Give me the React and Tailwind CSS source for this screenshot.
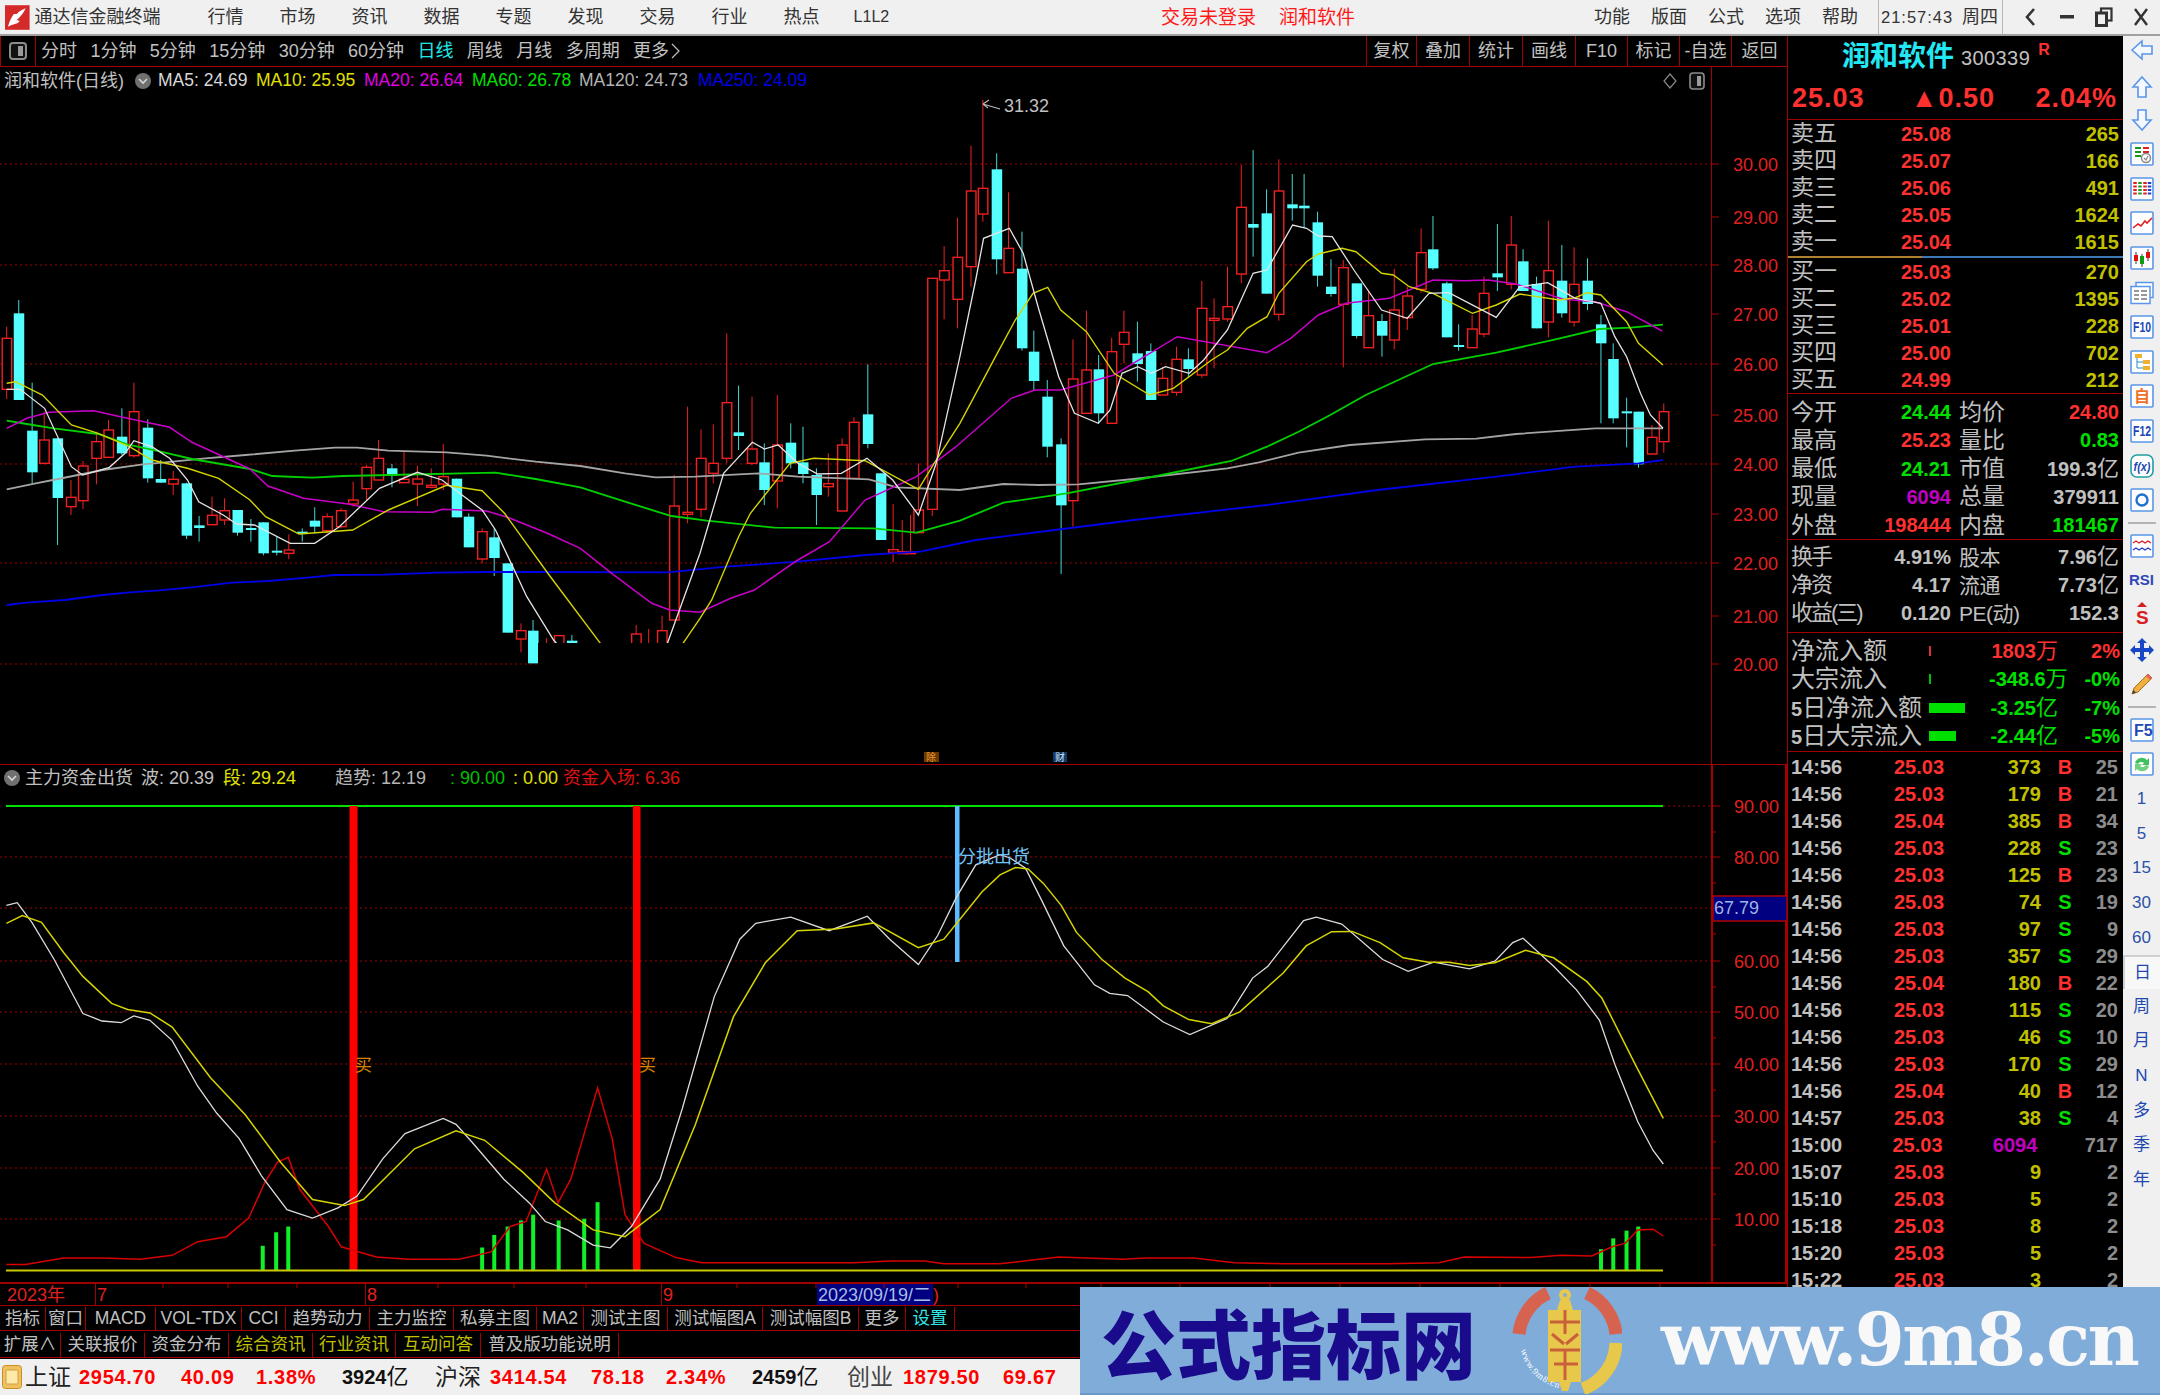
import React from "react";

// coordinate helpers: read off zoomed crops, mapped back to page pixels
const z8 = ([x, y]) => [x / 2.24, 280 + y / 3];
const z9 = ([x, y]) => [620 + x / 2.53, 80 + y / 3];
const z10 = ([x, y]) => [1180 + x / 2.53, 130 + y / 3];
const z11 = ([x, y]) => [x / 1.568, 760 + y / 2.958];
const z12 = ([x, y]) => [1000 + x / 1.96, 760 + y / 2.958];

const candles8 = [
  [15, "r", 140, 175, 328, 357], [42, "c", 60, 100, 360, 360], [72, "c", 308, 452, 577, 610], [99, "r", 395, 480, 550, 553],
  [129, "c", 475, 475, 654, 795], [159, "r", 600, 652, 680, 705], [186, "r", 543, 558, 662, 687], [216, "r", 455, 485, 535, 613],
  [243, "r", 420, 450, 532, 532], [273, "c", 385, 470, 520, 525], [300, "r", 308, 395, 527, 533], [331, "c", 418, 443, 595, 608],
  [360, "c", 540, 597, 608, 608], [388, "r", 573, 598, 612, 645], [418, "c", 608, 610, 767, 777], [446, "c", 708, 736, 744, 785],
  [475, "r", 650, 706, 734, 734], [503, "r", 655, 692, 720, 735], [532, "c", 690, 690, 758, 767], [562, "c", 717, 744, 748, 785],
  [590, "c", 727, 727, 820, 826], [620, "c", 770, 812, 817, 826], [647, "r", 763, 810, 820, 838], [677, "c", 745, 755, 758, 785],
  [705, "c", 682, 722, 740, 760], [733, "r", 700, 710, 752, 760], [764, "r", 685, 692, 740, 745], [791, "r", 605, 660, 672, 680],
  [821, "r", 555, 562, 626, 660], [848, "r", 480, 535, 600, 600], [878, "c", 552, 565, 587, 622], [905, "r", 515, 598, 608, 608],
  [935, "r", 557, 597, 612, 678], [966, "r", 565, 616, 622, 625], [993, "r", 492, 590, 612, 630], [1023, "c", 596, 596, 712, 712],
  [1050, "c", 700, 710, 802, 802], [1080, "r", 745, 755, 837, 850], [1107, "c", 745, 772, 834, 888], [1137, "c", 850, 850, 1058, 1058],
  [1167, "r", 1030, 1052, 1077, 1117], [1194, "c", 1020, 1052, 1150, 1150], [1224, "r", 1075, 1100, 1200, 1200], [1252, "r", 1067, 1067, 1200, 1200],
  [1281, "c", 1065, 1082, 1200, 1200], [1425, "r", 1035, 1062, 1200, 1200], [1453, "r", 1047, 1100, 1200, 1200], [1483, "r", 1007, 1052, 1200, 1200],
];
const candles9 = [
  [137, "r", 1185, 1278, 1620, 1620], [171, "r", 980, 1297, 1303, 1330], [205, "r", 1048, 1135, 1288, 1312], [236, "r", 1033, 1150, 1180, 1210],
  [270, "r", 760, 968, 1135, 1150], [300, "c", 917, 1057, 1068, 1110], [334, "r", 950, 1107, 1150, 1155], [365, "c", 1090, 1147, 1230, 1275],
  [398, "r", 945, 1095, 1203, 1285], [432, "c", 1030, 1088, 1150, 1165], [463, "c", 1040, 1147, 1182, 1210], [497, "c", 1165, 1185, 1245, 1335],
  [527, "r", 1120, 1211, 1220, 1250], [562, "r", 1075, 1095, 1293, 1293], [592, "r", 1012, 1027, 1195, 1195], [627, "c", 853, 1003, 1092, 1105],
  [660, "c", 1180, 1180, 1380, 1380], [691, "r", 1272, 1409, 1417, 1447], [714, "r", 1320, 1415, 1417, 1417], [735, "r", 1305, 1415, 1417, 1417],
  [755, "r", 1150, 1290, 1358, 1358], [790, "r", 595, 595, 1288, 1308], [820, "r", 498, 572, 600, 718], [854, "r", 413, 532, 658, 745],
  [888, "r", 197, 333, 560, 620], [918, "r", 60, 325, 402, 425], [953, "c", 220, 268, 538, 583], [983, "r", 337, 505, 578, 578],
  [1017, "c", 455, 566, 805, 812], [1047, "c", 752, 815, 903, 930], [1081, "c", 900, 950, 1100, 1132], [1116, "c", 1075, 1093, 1276, 1482],
  [1146, "r", 778, 897, 1262, 1340], [1180, "r", 692, 870, 1000, 1000], [1211, "c", 825, 868, 1000, 1030], [1244, "r", 773, 815, 1030, 1030],
  [1275, "r", 692, 757, 793, 850], [1309, "c", 725, 820, 852, 905], [1343, "c", 790, 813, 960, 960], [1373, "r", 860, 895, 945, 945],
  [1408, "r", 800, 838, 937, 947], [1438, "c", 805, 838, 867, 893], [1472, "r", 603, 685, 885, 893], [1503, "r", 655, 715, 718, 865],
  [1537, "r", 560, 680, 717, 725],
];
const candles10 = [
  [155, "r", 105, 232, 432, 460], [185, "c", 60, 282, 293, 380], [219, "c", 178, 250, 491, 491], [250, "r", 88, 183, 553, 572],
  [284, "c", 132, 223, 235, 272], [314, "c", 132, 227, 235, 293], [348, "c", 245, 277, 437, 470], [382, "c", 388, 470, 492, 500],
  [413, "r", 390, 413, 523, 712], [447, "c", 460, 460, 618, 625], [477, "r", 480, 557, 653, 653], [511, "c", 552, 573, 617, 680],
  [542, "r", 417, 540, 630, 658], [575, "r", 470, 498, 563, 600], [610, "r", 295, 368, 478, 488], [640, "c", 258, 358, 415, 420],
  [675, "c", 455, 460, 622, 622], [705, "c", 583, 645, 650, 662], [739, "r", 555, 597, 653, 653], [769, "r", 440, 490, 612, 622],
  [803, "c", 282, 430, 442, 483], [838, "r", 258, 345, 463, 478], [868, "c", 358, 394, 483, 483], [902, "c", 440, 462, 595, 595],
  [932, "r", 272, 422, 576, 622], [966, "c", 345, 452, 550, 563], [997, "r", 352, 463, 576, 590], [1031, "c", 385, 452, 522, 540],
  [1065, "c", 555, 583, 640, 880], [1096, "c", 640, 687, 865, 880], [1130, "c", 803, 844, 848, 952], [1160, "c", 845, 845, 1003, 1013],
  [1194, "r", 885, 922, 972, 972], [1224, "r", 820, 845, 935, 968],
];

const realCandle = (fn) => ([zx, type, hi, top, bot, lo]) => ({
  x: fn([zx, 0])[0], type, hi: fn([0, hi])[1], top: fn([0, top])[1], bot: fn([0, bot])[1], lo: fn([0, lo])[1],
});
const allCandles = [...candles8.map(realCandle(z8)), ...candles9.map(realCandle(z9)), ...candles10.map(realCandle(z10))];

// stitch one curve out of the three crops
const joined = (a, b, c, cut1 = 630, cut2 = 1190) => [
  ...a.map(z8).filter((p) => p[0] <= cut1),
  ...b.map(z9).filter((p) => p[0] > cut1 && p[0] < cut2),
  ...c.map(z10).filter((p) => p[0] >= cut2),
];
const pts = (list) => list.map((p) => `${p[0].toFixed(1)},${p[1].toFixed(1)}`).join(" ");

const ma250 = joined(
  [[15, 975], [60, 968], [145, 960], [230, 945], [290, 937], [350, 932], [430, 922], [520, 908], [600, 903], [690, 893], [750, 885], [860, 884], [980, 878], [1090, 876], [1200, 876]],
  [[120, 1477], [270, 1460], [450, 1445], [620, 1425], [760, 1415], [900, 1380], [1100, 1350], [1300, 1320], [1568, 1285]],
  [[220, 1125], [500, 1080], [800, 1040], [1000, 1010], [1160, 1000], [1222, 990]]
);
const ma120 = joined(
  [[15, 628], [80, 610], [130, 597], [230, 570], [320, 553], [370, 547], [460, 535], [550, 525], [660, 512], [750, 503], [800, 503], [870, 512], [1000, 517], [1090, 527], [1200, 545], [1300, 558], [1400, 580]],
  [[90, 1192], [190, 1190], [350, 1180], [450, 1190], [630, 1198], [700, 1222], [860, 1230], [970, 1212], [1060, 1215], [1160, 1213], [1300, 1197], [1450, 1178], [1568, 1160]],
  [[120, 1015], [200, 997], [300, 968], [430, 945], [620, 928], [750, 926], [850, 912], [1050, 895], [1222, 895]]
);
const ma60 = joined(
  [[15, 422], [60, 432], [120, 445], [220, 462], [290, 495], [360, 515], [430, 537], [560, 567], [610, 588], [700, 593], [770, 588], [1110, 578], [1200, 597], [1300, 622], [1400, 665]],
  [[130, 1308], [220, 1322], [390, 1343], [640, 1345], [750, 1358], [860, 1322], [970, 1268], [1130, 1240], [1320, 1197], [1450, 1175], [1568, 1135]],
  [[130, 993], [220, 950], [300, 905], [380, 855], [470, 795], [640, 702], [800, 668], [950, 628], [1060, 597], [1140, 593], [1222, 584]]
);
const ma20 = joined(
  [[15, 445], [60, 415], [110, 397], [210, 392], [270, 410], [380, 442], [430, 487], [560, 567], [600, 618], [680, 655], [780, 672], [860, 695], [970, 697], [990, 688], [1090, 693], [1140, 713], [1230, 762], [1300, 805], [1370, 880]],
  [[70, 1560], [280, 1555], [340, 1530], [450, 1440], [530, 1385], [620, 1260], [750, 1190], [850, 1100], [990, 955], [1050, 930], [1115, 930], [1250, 885], [1410, 770], [1450, 787], [1568, 818]],
  [[220, 668], [280, 625], [350, 555], [420, 520], [530, 505], [640, 450], [720, 452], [780, 450], [850, 462], [970, 508], [1050, 515], [1130, 545], [1220, 603]]
);
const ma20Fix = [...ma20.slice(0, 19), ...[[1460, 970], [1500, 990], [1568, 997]].map(z8), ...ma20.slice(19).filter((p) => p[0] > 700)];
const ma10 = joined(
  [[15, 310], [35, 305], [95, 345], [160, 435], [220, 460], [290, 500], [340, 540], [420, 565], [490, 595], [560, 660], [595, 710], [670, 762], [790, 750], [870, 690], [1000, 616], [1080, 632], [1130, 700], [1230, 885], [1345, 1090], [1430, 1250], [1530, 1090], [1568, 1015]],
  [[232, 1560], [300, 1370], [330, 1300], [430, 1150], [490, 1135], [620, 1142], [755, 1228], [800, 1140], [860, 1030], [950, 830], [1000, 720], [1045, 640], [1082, 622], [1115, 690], [1180, 755], [1250, 880], [1340, 945], [1400, 925]],
  [[80, 690], [120, 660], [170, 595], [220, 560], [250, 490], [320, 395], [350, 372], [410, 355], [445, 365], [510, 430], [540, 435], [580, 470], [640, 490], [740, 550], [800, 525], [860, 492], [960, 510], [1000, 503], [1030, 488], [1065, 495], [1130, 575], [1160, 640], [1222, 705]],
  700, 1195
);
const ma5 = joined(
  [[15, 328], [45, 328], [100, 385], [160, 560], [185, 585], [245, 562], [280, 520], [300, 482], [340, 500], [380, 535], [420, 600], [445, 665], [500, 705], [530, 732], [570, 735], [650, 790], [705, 790], [760, 740], [850, 625], [935, 577], [990, 600], [1040, 650], [1080, 690], [1110, 750], [1180, 950], [1240, 1080], [1350, 1250], [1495, 1090], [1568, 820]],
  [[262, 1180], [335, 1087], [365, 1107], [400, 1095], [450, 1150], [500, 1182], [560, 1180], [625, 1135], [690, 1200], [755, 1305], [800, 1150], [860, 830], [900, 600], [920, 475], [985, 445], [1020, 520], [1060, 690], [1110, 890], [1150, 1000], [1210, 1030], [1240, 990], [1270, 880], [1310, 860], [1345, 880], [1380, 860], [1440, 880], [1500, 820], [1540, 760]],
  [[60, 690], [120, 600], [185, 430], [220, 420], [285, 285], [320, 295], [350, 318], [385, 320], [440, 420], [510, 540], [575, 565], [630, 490], [680, 488], [800, 562], [860, 470], [930, 458], [1000, 505], [1065, 520], [1100, 620], [1130, 680], [1165, 790], [1190, 855], [1222, 895]],
  700, 1200
);

const oscWhite = [
  ...[[10, 430], [27, 422], [50, 480], [85, 590], [130, 750], [160, 772], [190, 777], [210, 757], [235, 770], [270, 830], [310, 965], [340, 1045], [375, 1120], [410, 1230], [450, 1330], [490, 1355], [530, 1325], [560, 1290], [600, 1180], [635, 1105], [695, 1060], [715, 1078], [740, 1130], [790, 1240], [830, 1310], [855, 1365], [890, 1390], [930, 1435], [957, 1443], [990, 1380], [1035, 1240], [1070, 1030], [1120, 700], [1160, 530], [1185, 483], [1240, 465], [1300, 505], [1360, 462], [1395, 530], [1440, 605], [1470, 520], [1500, 405], [1530, 310], [1568, 280]].map(z11),
  ...[[20, 290], [50, 320], [80, 410], [125, 550], [185, 665], [215, 690], [250, 697], [320, 775], [372, 812], [445, 765], [495, 645], [525, 610], [595, 475], [620, 465], [670, 485], [750, 590], [800, 625], [850, 598], [920, 618], [970, 595], [1005, 540], [1025, 527], [1085, 610], [1130, 680], [1175, 770], [1205, 900], [1250, 1070], [1280, 1155], [1300, 1195]].map(z12),
];
const oscYellow = [
  ...[[10, 483], [35, 460], [65, 480], [100, 570], [130, 640], [175, 720], [200, 738], [235, 748], [270, 790], [330, 940], [385, 1050], [440, 1190], [490, 1300], [540, 1318], [570, 1300], [650, 1150], [715, 1097], [760, 1125], [820, 1220], [870, 1310], [930, 1390], [980, 1410], [1035, 1330], [1090, 1080], [1150, 760], [1200, 600], [1250, 505], [1310, 500], [1370, 482], [1440, 555], [1480, 530], [1540, 390], [1568, 340]].map(z11),
  ...[[30, 318], [55, 322], [85, 365], [120, 430], [150, 510], [200, 590], [245, 645], [290, 685], [320, 727], [370, 768], [415, 780], [470, 745], [555, 630], [600, 550], [650, 508], [690, 507], [745, 540], [790, 585], [840, 598], [880, 598], [920, 608], [970, 600], [1030, 563], [1085, 585], [1150, 655], [1180, 705], [1245, 900], [1300, 1060]].map(z12),
];
const oscRed = [
  ...[[10, 1492], [40, 1492], [100, 1473], [160, 1473], [220, 1477], [270, 1465], [310, 1425], [355, 1410], [390, 1355], [415, 1250], [435, 1190], [452, 1175], [470, 1270], [515, 1380], [535, 1440], [590, 1470], [640, 1477], [720, 1477], [770, 1455], [800, 1380], [825, 1365], [857, 1210], [875, 1310], [895, 1240], [937, 970], [960, 1120], [980, 1345], [1010, 1430], [1060, 1472], [1100, 1487], [1340, 1487], [1395, 1482], [1450, 1482], [1480, 1490], [1568, 1490]].map(z11),
  ...[[60, 1480], [115, 1470], [240, 1477], [285, 1473], [380, 1473], [460, 1487], [560, 1490], [680, 1490], [760, 1490], [860, 1487], [910, 1470], [1040, 1472], [1100, 1465], [1160, 1467], [1200, 1440], [1225, 1430], [1250, 1390], [1280, 1388], [1300, 1408]].map(z12),
];
const greenBars = [
  ...[[412, 1437], [433, 1397], [452, 1380], [756, 1442], [775, 1405], [796, 1380], [817, 1362], [836, 1345], [876, 1362], [916, 1357], [937, 1308]].map(z11),
  ...[[1178, 1447], [1202, 1415], [1228, 1392], [1251, 1380]].map(z12),
];

function MainChart() {
  return (
    <svg className="block" width="1711" height="669" viewBox="0 95 1711 669">
      {[164, 265, 364, 464, 563, 664].map((y) => (
        <line key={y} x1="0" x2="1711" y1={y} y2={y} stroke="#a00000" strokeWidth="1" strokeDasharray="2 3" />
      ))}
      {allCandles.map((c, i) =>
        c.type === "c" ? (
          <g key={i}>
            <line x1={c.x} x2={c.x} y1={c.hi} y2={c.lo} stroke="#45d8d8" strokeWidth="1" />
            <rect x={c.x - 5} y={c.top} width="10.5" height={Math.max(c.bot - c.top, 2)} fill="#55ffff" />
          </g>
        ) : (
          <g key={i}>
            <line x1={c.x} x2={c.x} y1={c.hi} y2={c.lo} stroke="#f02020" strokeWidth="1" />
            <rect x={c.x - 4.5} y={c.top} width="9.5" height={Math.max(c.bot - c.top, 2)} fill="#000" stroke="#f02020" strokeWidth="1.4" />
          </g>
        )
      )}
      <polyline points={pts(ma250)} fill="none" stroke="#0000e8" strokeWidth="1.8" />
      <polyline points={pts(ma120)} fill="none" stroke="#a4a4a4" strokeWidth="1.8" />
      <polyline points={pts(ma60)} fill="none" stroke="#00d000" strokeWidth="1.8" />
      <polyline points={pts(ma20Fix)} fill="none" stroke="#c800c8" strokeWidth="1.5" />
      <polyline points={pts(ma10)} fill="none" stroke="#d4d400" strokeWidth="1.4" />
      <polyline points={pts(ma5)} fill="none" stroke="#e4e4e4" strokeWidth="1.3" />
      {/* lower strip of the price pane is blanked in the reference */}
      <rect x="538" y="643" width="1173" height="121" fill="#000" />
      <path d="M983 104 L1000 109 M983 104 L989 100 M983 104 L988 108" stroke="#b8b8b8" strokeWidth="1.2" fill="none" />
      <text x="1004" y="112" fontSize="18" fill="#c0c0c0">31.32</text>
      <rect x="924" y="752" width="15" height="10" fill="#6b3800" />
      <text x="926" y="761" fontSize="10" fill="#e89a30">除</text>
      <rect x="1053" y="752" width="14" height="10" fill="#123a66" />
      <text x="1055" y="761" fontSize="10" fill="#cfe6ff">财</text>
    </svg>
  );
}

function LowerChart() {
  return (
    <svg className="block" width="1711" height="492" viewBox="0 790 1711 492">
      {[857, 908, 961, 1012, 1064, 1116, 1168, 1219].map((y) => (
        <line key={y} x1="0" x2="1711" y1={y} y2={y} stroke="#a00000" strokeWidth="1" strokeDasharray="2 3" />
      ))}
      <line x1="1663" x2="1711" y1="806" y2="806" stroke="#a00000" strokeDasharray="2 3" />
      <line x1="6" x2="1663" y1="806" y2="806" stroke="#00e000" strokeWidth="2" />
      <rect x="349.5" y="806" width="8" height="464" fill="#ff0000" />
      <rect x="633" y="806" width="7.5" height="464" fill="#ff0000" />
      <rect x="955" y="806" width="4.5" height="156" fill="#5cbcff" />
      {greenBars.map((b, i) => (
        <rect key={i} x={b[0] - 2} y={b[1]} width="4" height={1270 - b[1]} fill="#10f028" />
      ))}
      <polyline points={pts(oscRed)} fill="none" stroke="#d80000" strokeWidth="1.5" />
      <polyline points={pts(oscWhite)} fill="none" stroke="#dcdcdc" strokeWidth="1.3" />
      <polyline points={pts(oscYellow)} fill="none" stroke="#d4d400" strokeWidth="1.5" />
      <line x1="6" x2="1663" y1="1270.5" y2="1270.5" stroke="#c8c800" strokeWidth="2" />
      <text x="355" y="1071" fontSize="17" fill="#d88400">买</text>
      <text x="639" y="1071" fontSize="17" fill="#d88400">买</text>
      <text x="958" y="863" fontSize="18" fill="#70c4f8">分批出货</text>
    </svg>
  );
}

function MainAxis() {
  const labels = [["30.00", 164], ["29.00", 217], ["28.00", 265], ["27.00", 314], ["26.00", 364], ["25.00", 415], ["24.00", 464], ["23.00", 514], ["22.00", 563], ["21.00", 616], ["20.00", 664]];
  return (
    <svg className="block" width="75" height="697" viewBox="0 67 75 697">
      {labels.map(([t, y]) => (
        <g key={t}>
          <line x1="0" x2="7" y1={y} y2={y} stroke="#b00000" strokeWidth="1" />
          <text x="21" y={y + 6.5} fontSize="18" fill="#e02020">{t}</text>
        </g>
      ))}
    </svg>
  );
}

function LowerAxis() {
  const labels = [["90.00", 806], ["80.00", 857], ["60.00", 961], ["50.00", 1012], ["40.00", 1064], ["30.00", 1116], ["20.00", 1168], ["10.00", 1219]];
  const minor = [832, 883, 934, 987, 1038, 1090, 1142, 1194, 1245];
  return (
    <svg className="block" width="74" height="517" viewBox="0 765 74 517">
      {minor.map((y) => (
        <line key={y} x1="0" x2="3" y1={y} y2={y} stroke="#b00000" strokeWidth="1" />
      ))}
      {labels.map(([t, y]) => (
        <g key={t}>
          <line x1="0" x2="7" y1={y} y2={y} stroke="#b00000" strokeWidth="1" />
          <text x="21" y={y + 6.5} fontSize="18" fill="#e02020">{t}</text>
        </g>
      ))}
      <rect x="0" y="896" width="74" height="25" fill="#000080" stroke="#b00000" strokeWidth="1.5" />
      <text x="1" y="914" fontSize="18" fill="#9fb4e6">67.79</text>
    </svg>
  );
}

// ---- right quote panel ----
const asks = [["卖五", "25.08", "265"], ["卖四", "25.07", "166"], ["卖三", "25.06", "491"], ["卖二", "25.05", "1624"], ["卖一", "25.04", "1615"]];
const bids = [["买一", "25.03", "270"], ["买二", "25.02", "1395"], ["买三", "25.01", "228"], ["买四", "25.00", "702"], ["买五", "24.99", "212"]];

const RED = "text-[#ff3030]";
const GREEN = "text-[#00e000]";
const GRAY = "text-[#c0c0c0]";
const PURPLE = "text-[#c000c0]";

const stats = [
  ["今开", "24.44", GREEN, "均价", "24.80", RED],
  ["最高", "25.23", RED, "量比", "0.83", GREEN],
  ["最低", "24.21", GREEN, "市值", "199.3", GRAY, "亿"],
  ["现量", "6094", PURPLE, "总量", "379911", GRAY],
  ["外盘", "198444", RED, "内盘", "181467", GREEN],
];
const ticks = [
  ["14:56", "25.03", "373", "B", "25"], ["14:56", "25.03", "179", "B", "21"], ["14:56", "25.04", "385", "B", "34"], ["14:56", "25.03", "228", "S", "23"],
  ["14:56", "25.03", "125", "B", "23"], ["14:56", "25.03", "74", "S", "19"], ["14:56", "25.03", "97", "S", "9"], ["14:56", "25.03", "357", "S", "29"],
  ["14:56", "25.04", "180", "B", "22"], ["14:56", "25.03", "115", "S", "20"], ["14:56", "25.03", "46", "S", "10"], ["14:56", "25.03", "170", "S", "29"],
  ["14:56", "25.04", "40", "B", "12"], ["14:57", "25.03", "38", "S", "4"], ["15:00", "25.03", "6094", "", "717"], ["15:07", "25.03", "9", "", "2"],
  ["15:10", "25.03", "5", "", "2"], ["15:18", "25.03", "8", "", "2"], ["15:20", "25.03", "5", "", "2"], ["15:22", "25.03", "3", "", "2"],
];
const flows = [
  { label: "净流入额", bar: 2, barColor: "bg-[#e03030]", value: "1803", unit: "万", pct: "2%", color: RED },
  { label: "大宗流入", bar: 2, barColor: "bg-[#00c000]", value: "-348.6", unit: "万", pct: "-0%", color: GREEN },
  { label: "日净流入额", five: true, bar: 36, barColor: "bg-[#00e000]", value: "-3.25", unit: "亿", pct: "-7%", color: GREEN },
  { label: "日大宗流入", five: true, bar: 27, barColor: "bg-[#00e000]", value: "-2.44", unit: "亿", pct: "-5%", color: GREEN },
];

function BookRow({ row }) {
  return (
    <div className="flex h-[27px] items-center pl-[3px] pr-[4px] leading-none">
      <span className="w-[100px] text-[23px] text-[#c0c0c0]">{row[0]}</span>
      <span className="w-[60px] text-right text-[20px] font-bold text-[#ff3030]">{row[1]}</span>
      <span className="flex-1 text-right text-[20px] font-bold text-[#c0c000]">{row[2]}</span>
    </div>
  );
}

function QuotePanel() {
  return (
    <div className="w-[336px] h-full overflow-hidden border-l border-[#a00000] bg-black">
      <div className="flex h-[38px] items-center pl-[54px] leading-none">
        <span className="mt-[3px] text-[28px] font-bold text-[#22e8f4]">润和软件</span>
        <span className="ml-[7px] mt-[6px] text-[20px] tracking-[0.4px] text-[#c0c0c0]">300339</span>
        <span className="ml-[8px] -mt-[10px] text-[16px] font-bold text-[#ff3030]">R</span>
      </div>
      <div className="flex h-[46px] items-center border-b border-[#a00000] pl-[4px] pr-[6px] pt-[3px] text-[27px] font-bold leading-none tracking-[1px] text-[#ff3030]">
        <span className="w-[119px]">25.03</span>
        <span className="w-[125px]">▲0.50</span>
        <span>2.04%</span>
      </div>
      {asks.map((r) => <BookRow key={r[0]} row={r} />)}
      <div className="mt-[1px] flex h-[2px]">
        <div className="w-[134px] bg-[#b08030]" />
        <div className="flex-1 bg-[#3a78b8]" />
      </div>
      {bids.map((r) => <BookRow key={r[0]} row={r} />)}
      <div className="border-t border-[#a00000] pt-[4px]">
        {stats.map((r) => (
          <div key={r[0]} className="flex h-[28.25px] items-center pl-[3px] pr-[4px] leading-none">
            <span className="w-[46px] text-[23px] text-[#c0c0c0]">{r[0]}</span>
            <span className={`w-[114px] text-right text-[20px] font-bold ${r[2]}`}>{r[1]}</span>
            <span className="ml-[8px] w-[46px] text-[23px] text-[#c0c0c0]">{r[3]}</span>
            <span className={`flex-1 text-right text-[20px] font-bold ${r[5]}`}>
              {r[4]}
              {r[6] && <span className="text-[22px] font-normal">{r[6]}</span>}
            </span>
          </div>
        ))}
      </div>
      <div className="h-[93px] border-t border-[#a00000] pt-[3px]">
        {[["换手", "4.91%", "股本", "7.96", "亿"], ["净资", "4.17", "流通", "7.73", "亿"], ["收益(三)", "0.120", "PE(动)", "152.3", ""]].map((r) => (
          <div key={r[0]} className="flex h-[28px] items-center pl-[3px] pr-[4px] leading-none">
            <span className="w-[80px] whitespace-nowrap text-[22px] tracking-[-2px] text-[#c0c0c0]">{r[0]}</span>
            <span className="w-[80px] text-right text-[20px] font-bold text-[#c0c0c0]">{r[1]}</span>
            <span className="ml-[8px] w-[80px] whitespace-nowrap text-[21px] tracking-[-0.5px] text-[#c0c0c0]">{r[2]}</span>
            <span className="flex-1 text-right text-[20px] font-bold text-[#c0c0c0]">
              {r[3]}
              {r[4] && <span className="text-[22px] font-normal">{r[4]}</span>}
            </span>
          </div>
        ))}
      </div>
      <div className="h-[119px] border-t border-[#a00000] pt-[3px]">
        {flows.map((f) => (
          <div key={f.label} className="flex h-[28.5px] items-center pl-[3px] pr-[3px] leading-none">
            <span className="w-[138px] whitespace-nowrap text-[24px] text-[#c0c0c0]">
              {f.five && <span className="text-[20px] font-bold">5</span>}
              {f.label}
            </span>
            <span className="w-[60px]">
              <span className={`block h-[10px] ${f.barColor}`} style={{ width: f.bar }} />
            </span>
            <span className={`w-[69px] whitespace-nowrap text-right text-[20px] font-bold ${f.color}`}>
              {f.value}
              <span className="text-[22px] font-normal">{f.unit}</span>
            </span>
            <span className={`flex-1 text-right text-[20px] font-bold ${f.color}`}>{f.pct}</span>
          </div>
        ))}
      </div>
      <div className="border-t border-[#a00000] pt-[1px]">
        {ticks.map((t, i) => (
          <div key={i} className="flex h-[27px] items-center pl-[3px] pr-[5px] text-[20px] font-bold leading-none">
            <span className="w-[103px] text-[#c0c0c0]">{t[0]}</span>
            <span className="w-[52px] text-[#ff3030]">{t[1]}</span>
            <span className={`w-[95px] text-right ${t[2] === "6094" ? "text-[#c000c0]" : "text-[#c0c000]"}`}>{t[2]}</span>
            <span className={`w-[48px] text-center ${t[3] === "B" ? "text-[#ff3030]" : "text-[#00e000]"}`}>{t[3]}</span>
            <span className="flex-1 text-right text-[#8c8c8c]">{t[4]}</span>
          </div>
        ))}
      </div>
    </div>
  );
}

// ---- right icon rail ----
const Box = ({ children }) => (
  <svg width="24" height="24" viewBox="0 0 24 24">
    <rect x="1" y="1" width="22" height="22" rx="1" fill="#fff" stroke="#5a96e8" strokeWidth="1.6" />
    {children}
  </svg>
);
const Arrow = ({ rotate }) => (
  <svg width="24" height="24" viewBox="0 0 24 24" style={{ transform: `rotate(${rotate}deg)` }}>
    <path d="M12 2 L21 12 L16 12 L16 22 L8 22 L8 12 L3 12 Z" fill="#f4f8ff" stroke="#5a96e8" strokeWidth="1.6" />
  </svg>
);
const railIcons = [
  <Box key="a">
    <path d="M5 6h6M5 10h6M5 14h6" stroke="#1a9a1a" strokeWidth="1.8" />
    <path d="M13 6h6M13 10h6" stroke="#e02020" strokeWidth="1.8" />
    <circle cx="16" cy="16" r="4.5" fill="#fff" stroke="#888" strokeWidth="1.5" />
    <path d="M14 16l2 2 2-4" stroke="#888" strokeWidth="1.2" fill="none" />
  </Box>,
  <Box key="b">
    <path d="M5 5v14" stroke="#e02020" strokeWidth="3.5" strokeDasharray="2 1.5" />
    <path d="M10 5v14" stroke="#1a9a1a" strokeWidth="3.5" strokeDasharray="2 1.5" />
    <path d="M15 5v14" stroke="#e02020" strokeWidth="3.5" strokeDasharray="2 1.5" />
    <path d="M19.500 5v14" stroke="#2040d0" strokeWidth="3.5" strokeDasharray="2 1.5" />
  </Box>,
  <Box key="c"><path d="M3 17l5-4 3 2 4-5 2 2 5-5" stroke="#e02020" strokeWidth="1.6" fill="none" /></Box>,
  <Box key="d">
    <path d="M6 6v12M12 8v13M18 3v12" stroke="#333" strokeWidth="1" />
    <rect x="4" y="9" width="4" height="6" fill="#e01010" />
    <rect x="10" y="10" width="4" height="8" fill="#109a10" />
    <rect x="16" y="6" width="4" height="6" fill="#e01010" />
  </Box>,
  <svg key="e" width="26" height="24" viewBox="0 0 26 24">
    <rect x="7" y="1.500" width="17" height="15" fill="#fff" stroke="#5a96e8" strokeWidth="1.5" />
    <rect x="2" y="5.500" width="19" height="17" fill="#fff" stroke="#5a96e8" strokeWidth="1.5" />
    <path d="M5 10h5M12 10h6M5 14h5M12 14h6M5 18h5M12 18h6" stroke="#777" strokeWidth="1.6" />
  </svg>,
  <Box key="f"><text x="3" y="17" fontSize="14" fill="#2048b8" fontWeight="700" textLength="18" lengthAdjust="spacingAndGlyphs">F10</text></Box>,
  <Box key="g">
    <rect x="5" y="4" width="7" height="4" fill="#f0b030" />
    <rect x="13" y="10" width="7" height="4" fill="#f0b030" />
    <rect x="13" y="16" width="7" height="4" fill="#f0b030" />
    <path d="M7 8v10h6M7 12h6" stroke="#2090d0" strokeWidth="1" fill="none" />
  </Box>,
  <Box key="h"><text x="4" y="18" fontSize="16" fill="#f07028" fontWeight="700">自</text></Box>,
  <Box key="i"><text x="3" y="17" fontSize="14" fill="#2048b8" fontWeight="700" textLength="18" lengthAdjust="spacingAndGlyphs">F12</text></Box>,
  <svg key="j" width="24" height="24" viewBox="0 0 24 24">
    <rect x="1" y="1" width="22" height="22" rx="6" fill="#fff" stroke="#20a0a0" strokeWidth="1.6" />
    <text x="3.5" y="16.5" fontSize="12" fontStyle="italic" fill="#2048b8" fontWeight="700" textLength="17" lengthAdjust="spacingAndGlyphs">f(x)</text>
  </svg>,
  <Box key="k"><circle cx="12" cy="12" r="5.500" fill="none" stroke="#2070d0" strokeWidth="2.4" /></Box>,
  null,
  <Box key="l">
    <path d="M3 9l3-2 3 2 3-2 3 2 3-2 3 2" stroke="#e02020" strokeWidth="1.4" fill="none" />
    <path d="M3 16l3-2 3 2 3-2 3 2 3-2 3 2" stroke="#2040d0" strokeWidth="1.4" fill="none" />
  </Box>,
  <span key="m" className="text-[15px] font-bold text-[#3048b8]">RSI</span>,
  <svg key="n" width="24" height="28" viewBox="0 0 24 28">
    <path d="M12 1l5 5h-10z" fill="#d02020" />
    <text x="6" y="23" fontSize="19" fontWeight="700" fill="#d82020">S</text>
  </svg>,
  <svg key="o" width="26" height="26" viewBox="0 0 26 26">
    <path d="M13 1l5 5h-3v5h5v-3l5 5-5 5v-3h-5v5h3l-5 5-5-5h3v-5H6v3l-5-5 5-5v3h5V6H8z" fill="#1848c8" />
  </svg>,
  <svg key="p" width="26" height="26" viewBox="0 0 26 26">
    <path d="M19 3l4 4L9 21l-6 2 2-6z" fill="#f0b040" stroke="#a07020" strokeWidth="1" />
    <path d="M19 3l4 4-2 2-4-4z" fill="#e86060" />
    <path d="M3 23l1.500-4 2.500 2.500z" fill="#444" />
  </svg>,
  null,
  <Box key="q"><text x="4" y="18" fontSize="16" fill="#2048b8" fontWeight="700">F5</text></Box>,
  <Box key="r">
    <path d="M5 11a7 7 0 0 1 12-3l2-2v7h-7l2-2a4 4 0 0 0-6 1z" fill="#40c060" />
    <path d="M19 14a7 7 0 0 1-12 3l-2 2v-7h7l-2 2a4 4 0 0 0 6-1z" fill="#70d080" />
  </Box>,
];

function Rail() {
  const labels = ["1", "5", "15", "30", "60"];
  const periods = ["周", "月", "N", "多", "季", "年"];
  return (
    <div className="flex w-[37px] flex-col items-center bg-[#f0f0f0]">
      <div className="flex h-[28px] w-full items-center justify-center"><Arrow rotate={-90} /></div>
      <div className="flex h-[46px] w-full items-center justify-center"><Arrow rotate={0} /></div>
      <div className="mb-[7px] flex h-[20px] w-full items-center justify-center"><Arrow rotate={180} /></div>
      {railIcons.map((icon, i) =>
        icon ? (
          <div key={i} className="flex h-[34.6px] w-full items-center justify-center">{icon}</div>
        ) : (
          <div key={i} className="flex h-[11px] w-full items-center justify-center">
            <div className="h-[2px] w-[28px] bg-[#b4b4b4]" />
          </div>
        )
      )}
      {labels.map((t) => (
        <div key={t} className="flex h-[34.6px] w-full items-center justify-center text-[17px] text-[#2a50a8]">{t}</div>
      ))}
      <div className="flex h-[34.6px] w-full items-center justify-center border-l-2 border-t-2 border-[#d0d0d0] bg-[#f8f8f8] text-[17px] text-[#2048b0]">日</div>
      {periods.map((t) => (
        <div key={t} className="flex h-[34.6px] w-full items-center justify-center text-[17px] text-[#2048b0]">{t}</div>
      ))}
    </div>
  );
}

// ---- bottom rows of the left column ----
const row1 = [["指标", 46], ["窗口", 40], ["MACD", 70], ["VOL-TDX", 86], ["CCI", 44], ["趋势动力", 84], ["主力监控", 84], ["私募主图", 83], ["MA2", 47], ["测试主图", 84], ["测试幅图A", 95], ["测试幅图B", 96], ["更多", 47], ["设置", 49]];
const row2 = [["扩展∧", 61], ["关联报价", 84], ["资金分布", 84], ["综合资讯", 84], ["行业资讯", 83], ["互动问答", 85], ["普及版功能说明", 138]];

function ButtonRow({ items, rowClass }) {
  return (
    <div className={`flex items-stretch border-b border-[#a00000] bg-black text-[17.5px] leading-none ${rowClass}`}>
      {items.map(([t, w]) => {
        const color = t === "设置" ? "text-[#30e8e8]" : ["综合资讯", "行业资讯", "互动问答"].includes(t) ? "text-[#c0c000]" : "text-[#c0c0c0]";
        return (
          <div key={t} className={`flex items-center justify-center whitespace-nowrap border-r border-[#a00000] ${color}`} style={{ width: w }}>{t}</div>
        );
      })}
    </div>
  );
}

function TimeAxis() {
  return (
    <div className="relative flex h-[24px] items-stretch border-t-2 border-b border-[#a00000] bg-black text-[18px] leading-none text-[#e02020]">
      <div className="flex w-[96px] items-center border-r border-[#a00000] pl-[7px]">2023年</div>
      <div className="flex w-[270px] items-center border-r border-[#a00000] pl-[1px]">7</div>
      <div className="flex w-[296px] items-center border-r border-[#a00000] pl-[1px]">8</div>
      <div className="flex w-[155px] items-center pl-[1px]">9</div>
      <div className="flex w-[116px] items-center whitespace-nowrap bg-[#000080] pl-[1px] text-[#a8bce8]">2023/09/19/二</div>
      <div className="flex items-center">)</div>
      <svg className="absolute left-0 top-0" width="1787" height="5">
        {[163, 228, 297, 438, 514, 586, 737, 816, 884, 958, 1026, 1101, 1180, 1270, 1340, 1420, 1500, 1590, 1660].map((x) => (
          <line key={x} x1={x} x2={x} y1="0" y2="4" stroke="#b00000" />
        ))}
      </svg>
    </div>
  );
}

function TopMenu() {
  const left = ["行情", "市场", "资讯", "数据", "专题", "发现", "交易", "行业", "热点"];
  const right = ["功能", "版面", "公式", "选项", "帮助"];
  return (
    <div className="flex h-[36px] items-center border-b-2 border-[#a0a0a0] bg-[#f0f0f0] text-[18px] leading-none text-[#333]">
      <svg className="ml-[5px]" width="25" height="25" viewBox="0 0 25 25">
        <rect width="25" height="25" fill="#d42a2a" />
        <path d="M21 3 C17 5 14 6 12 9 L9 9 C7 12 5 15 3 22 C7 19 12 20 15 16 L12 15 C15 12 19 8 21 3Z" fill="#fff" />
      </svg>
      <span className="ml-[5px] w-[126px] whitespace-nowrap">通达信金融终端</span>
      <div className="ml-[47px] flex gap-[36px]">
        {left.map((t) => <span key={t} className="w-[36px] whitespace-nowrap">{t}</span>)}
      </div>
      <span className="ml-[34px] w-[37px] text-[16px]">L1L2</span>
      <span className="ml-[271px] w-[96px] whitespace-nowrap text-[19px] text-[#ff1a1a]">交易未登录</span>
      <span className="ml-[23px] w-[76px] whitespace-nowrap text-[19px] text-[#ff1a1a]">润和软件</span>
      <div className="ml-[239px] flex gap-[21px]">
        {right.map((t) => <span key={t} className="w-[36px] whitespace-nowrap">{t}</span>)}
      </div>
      <div className="ml-[20px] flex h-full items-center border-l border-r border-[#b8b8b8] pl-[2px] pr-[4px]">
        <span className="w-[81px] text-[16.500px] tracking-[1px]">21:57:43</span>
        <span className="w-[36px] whitespace-nowrap">周四</span>
      </div>
      <div className="ml-[8px] flex items-center">
        <span className="flex w-[37px] justify-center">
          <svg width="12" height="20" viewBox="0 0 12 20"><path d="M10 2 L3 10 L10 18" fill="none" stroke="#333" strokeWidth="2.6" /></svg>
        </span>
        <span className="flex w-[37px] justify-center">
          <svg width="14" height="6" viewBox="0 0 14 6"><rect y="1" width="14" height="3.500" fill="#333" /></svg>
        </span>
        <span className="flex w-[37px] justify-center">
          <svg width="18" height="20" viewBox="0 0 18 20">
            <rect x="6" y="1.500" width="10.500" height="12" fill="none" stroke="#333" strokeWidth="2.200" />
            <rect x="1.500" y="6" width="10" height="12.500" fill="#f0f0f0" stroke="#333" strokeWidth="3" />
          </svg>
        </span>
        <span className="flex w-[38px] justify-center">
          <svg width="16" height="20" viewBox="0 0 16 20"><path d="M2 2 L14 18 M14 2 L2 18" stroke="#333" strokeWidth="2.400" /></svg>
        </span>
      </div>
    </div>
  );
}

function PeriodBar() {
  const periods = ["分时", "1分钟", "5分钟", "15分钟", "30分钟", "60分钟", "日线", "周线", "月线", "多周期"];
  const tools = [["复权", 50], ["叠加", 53], ["统计", 53], ["画线", 53], ["F10", 52], ["标记", 52], ["-自选", 52], ["返回", 56]];
  return (
    <div className="flex h-[31px] items-stretch border-b border-[#a00000] bg-black text-[18px] leading-none text-[#c0c0c0]">
      <div className="flex w-[36px] items-center justify-center border-x border-[#a00000]">
        <svg width="18" height="18" viewBox="0 0 18 18">
          <rect x="1" y="1" width="16" height="16" rx="3" fill="#111" stroke="#8c8c8c" strokeWidth="2" />
          <rect x="9" y="4" width="5" height="10" fill="#9a9a9a" />
        </svg>
      </div>
      <div className="ml-[5px] flex items-center gap-[13.4px]">
        {periods.map((t) => (
          <span key={t} className={`whitespace-nowrap ${t === "日线" ? "text-[#22e8e8]" : ""}`}>{t}</span>
        ))}
        <span className="flex items-center whitespace-nowrap">
          更多
          <svg className="ml-[2px]" width="9" height="16" viewBox="0 0 9 16"><path d="M1 1 L8 8 L1 15" fill="none" stroke="#c0c0c0" strokeWidth="1.200" /></svg>
        </span>
      </div>
      <div className="ml-auto flex">
        {tools.map(([t, w]) => (
          <div key={t} className="flex items-center justify-center whitespace-nowrap border-l border-[#a00000]" style={{ width: w }}>{t}</div>
        ))}
      </div>
    </div>
  );
}

function MainHeader() {
  return (
    <div className="flex h-[28px] items-center bg-black pl-[4px] text-[17.5px] leading-none">
      <span className="w-[130px] whitespace-nowrap text-[18px] text-[#c0c0c0]">润和软件(日线)</span>
      <svg width="18" height="18" viewBox="0 0 18 18">
        <circle cx="9" cy="9" r="8" fill="#707070" />
        <path d="M5 7l4 4 4-4" fill="none" stroke="#d8d8d8" strokeWidth="1.600" />
      </svg>
      <span className="ml-[6px] w-[98px] whitespace-nowrap text-[#d8d8d8]">MA5: 24.69</span>
      <span className="w-[108px] whitespace-nowrap text-[#e0e000]">MA10: 25.95</span>
      <span className="w-[108px] whitespace-nowrap text-[#e000e0]">MA20: 26.64</span>
      <span className="w-[107px] whitespace-nowrap text-[#00e000]">MA60: 26.78</span>
      <span className="w-[119px] whitespace-nowrap text-[#b4b4b4]">MA120: 24.73</span>
      <span className="whitespace-nowrap text-[#0000e8]">MA250: 24.09</span>
      <svg className="ml-auto" width="14" height="16" viewBox="0 0 14 16">
        <path d="M7 1 L13 8 L7 15 L1 8 Z" fill="none" stroke="#888" strokeWidth="1.200" />
      </svg>
      <svg className="ml-[12px] mr-[6px]" width="16" height="18" viewBox="0 0 16 18">
        <rect x="1" y="1" width="14" height="16" rx="3" fill="#111" stroke="#8c8c8c" strokeWidth="1.600" />
        <rect x="8" y="4" width="4" height="10" fill="#9a9a9a" />
      </svg>
    </div>
  );
}

function LowerHeader() {
  return (
    <div className="flex h-[25px] items-center bg-black text-[18px] leading-none">
      <svg className="ml-[3px]" width="18" height="18" viewBox="0 0 18 18">
        <circle cx="9" cy="9" r="8" fill="#707070" />
        <path d="M5 7l4 4 4-4" fill="none" stroke="#d8d8d8" strokeWidth="1.600" />
      </svg>
      <span className="ml-[4px] w-[116px] whitespace-nowrap text-[#c0c0c0]">主力资金出货</span>
      <span className="w-[82px] whitespace-nowrap text-[#c0c0c0]">波: 20.39</span>
      <span className="w-[112px] whitespace-nowrap text-[#e0e000]">段: 29.24</span>
      <span className="w-[115px] whitespace-nowrap text-[#b4b4b4]">趋势: 12.19</span>
      <span className="w-[63px] whitespace-nowrap text-[#00c000]">: 90.00</span>
      <span className="w-[50px] whitespace-nowrap text-[#e0e000]">: 0.00</span>
      <span className="whitespace-nowrap text-[#e01010]">资金入场: 6.36</span>
    </div>
  );
}

function StatusBar() {
  const num = "text-[20px] font-bold tracking-[0.7px] text-[#ff0000]";
  const vol = "text-[20px] font-bold text-[#111]";
  return (
    <div className="flex h-[36px] items-center bg-[#f0f0f0] leading-none">
      <svg className="ml-[2px] mr-[3px]" width="20" height="24" viewBox="0 0 20 24">
        <rect x="0.500" y="0.500" width="19" height="23" rx="3" fill="#f0c060" stroke="#c89020" />
        <rect x="4" y="5" width="12" height="14" rx="1" fill="#ffe9a8" stroke="#d0a040" />
      </svg>
      <span className="w-[54px] text-[23px] text-[#222]">上证</span>
      <span className={`w-[102px] ${num}`}>2954.70</span>
      <span className={`w-[75px] ${num}`}>40.09</span>
      <span className={`w-[86px] ${num}`}>1.38%</span>
      <span className={`w-[93px] whitespace-nowrap ${vol}`}>3924<span className="text-[22px] font-normal">亿</span></span>
      <span className="w-[55px] text-[23px] text-[#222]">沪深</span>
      <span className={`w-[101px] ${num}`}>3414.54</span>
      <span className={`w-[75px] ${num}`}>78.18</span>
      <span className={`w-[86px] ${num}`}>2.34%</span>
      <span className={`w-[95px] whitespace-nowrap ${vol}`}>2459<span className="text-[22px] font-normal">亿</span></span>
      <span className="w-[56px] text-[23px] text-[#444]">创业</span>
      <span className={`w-[100px] ${num}`}>1879.50</span>
      <span className={num}>69.67</span>
    </div>
  );
}

function Watermark() {
  return (
    <div className="absolute bottom-0 right-0 flex h-[108px] w-[1080px] items-center border-b-2 border-[#6a98c8] bg-[#80acd9] font-['DejaVu_Serif','Noto_Sans_CJK_SC',serif] leading-none">
      <span className="ml-[21px] w-[393px] whitespace-nowrap font-['Noto_Sans_CJK_SC',sans-serif] text-[75px] font-black text-[#1a0a8c]">公式指标网</span>
      <svg className="ml-[18px]" width="110" height="108" viewBox="0 0 110 108">
        <path id="wmArc" d="M8 60 A 51 51 0 0 0 70 102" fill="none" />
        <path d="M7 48 A 51 51 0 0 1 36 7" fill="none" stroke="#d6634f" strokeWidth="13" />
        <path d="M75 7 A 51 51 0 0 1 104 48" fill="none" stroke="#d6634f" strokeWidth="13" />
        <path d="M104 57 A 51 51 0 0 1 71 103" fill="none" stroke="#e8c84a" strokeWidth="13" />
        <circle cx="53" cy="9" r="6" fill="#e8c84a" />
        <circle cx="53" cy="9" r="2" fill="#80acd9" />
        <path d="M48 14 h10 l3 10 h8 v72 h-10 l-3 9 h-6 l-3 -9 h-11 v-72 h9 z" fill="#e8c84a" />
        <path d="M38 36 h30 M53 24 v24 M40 48 l12 10 M66 48 l-12 10 M38 64 h30 M53 64 v30 M42 78 h24" stroke="#c8603a" strokeWidth="3" fill="none" />
        <text fontSize="8" fill="#fff" letterSpacing="0.5">
          <textPath href="#wmArc" startOffset="4">www.9m8.cn</textPath>
        </text>
      </svg>
      <span className="ml-[39px] whitespace-nowrap text-[72px] font-bold tracking-[-2.5px] text-[#f8f8f8]">www.9m8.cn</span>
    </div>
  );
}

export default function App() {
  return (
    <div className="relative h-[1395px] w-[2160px] overflow-hidden bg-black font-['Liberation_Sans','Noto_Sans_CJK_SC',sans-serif]">
      <TopMenu />
      <div className="flex h-[1323px]">
        <div className="w-[1787px]">
          <PeriodBar />
          <div className="flex h-[698px] border-b border-[#a00000]">
            <div className="w-[1711px]">
              <MainHeader />
              <MainChart />
            </div>
            <div className="w-[76px] border-l border-[#a00000]">
              <MainAxis />
            </div>
          </div>
          <div className="flex h-[517px]">
            <div className="w-[1711px]">
              <LowerHeader />
              <LowerChart />
            </div>
            <div className="w-[76px] border-x-2 border-[#a80000]">
              <LowerAxis />
            </div>
          </div>
          <TimeAxis />
          <ButtonRow items={row1} rowClass="h-[25px] pt-[1px]" />
          <ButtonRow items={row2} rowClass="h-[27px] pt-[2px]" />
        </div>
        <QuotePanel />
        <Rail />
      </div>
      <StatusBar />
      <Watermark />
    </div>
  );
}
